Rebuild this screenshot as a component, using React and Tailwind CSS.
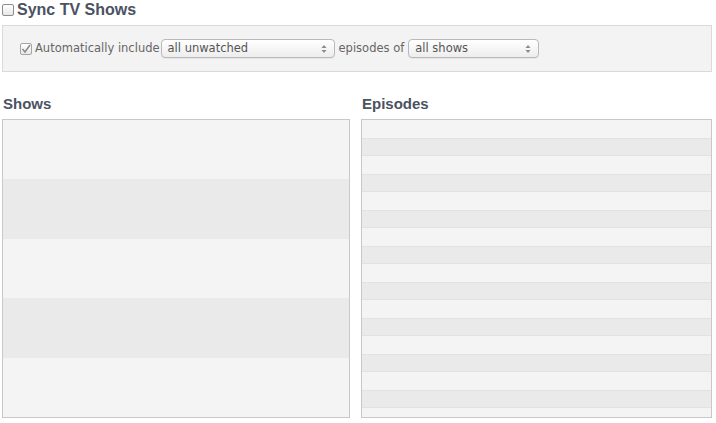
import React from "react";

function Arrows() {
  return (
    <svg width="6" height="10" viewBox="0 0 6 10" className="shrink-0">
      <path d="M3 1 L5.5 4 L0.5 4 Z" fill="#8a8a8a" />
      <path d="M3 9 L5.5 6 L0.5 6 Z" fill="#8a8a8a" />
    </svg>
  );
}

function Select({ label, width }) {
  return (
    <div
      className={`flex items-center justify-between h-[19px] rounded-[4px] border border-[#b9b9b9] bg-gradient-to-b from-[#ffffff] to-[#ededed] pl-[6px] pr-[7px] text-[11.5px] text-[#555] shadow-[0_1px_0_rgba(0,0,0,0.05)] ${width}`}
    >
      <span className="leading-none">{label}</span>
      <Arrows />
    </div>
  );
}

export default function App() {
  const showRows = [0, 1, 2, 3, 4];
  const epRows = Array.from({ length: 17 }, (_, i) => i);
  return (
    <div className="w-[716px] h-[423px] bg-white overflow-hidden font-['Liberation_Sans',Arial,sans-serif]">
      <div className="flex items-center h-[19px] pl-[2px] pt-[1px]">
        <div className="w-[12px] h-[12px] border border-[#8c8c8c] rounded-[2px] bg-gradient-to-b from-white to-[#e6e6e6]" />
        <span className="ml-[3px] text-[16px] font-bold text-[#4b5262] leading-none">Sync TV Shows</span>
      </div>
      <div className="mx-[2px] mt-[6px] w-[710px] h-[47px] border border-[#dadada] bg-[#f3f3f3] flex items-center pl-[17px] text-[11.5px] text-[#666] font-['DejaVu_Sans',sans-serif]">
        <div className="w-[12px] h-[12px] border border-[#a5a5a5] rounded-[2px] bg-gradient-to-b from-white to-[#e8e8e8] flex items-center justify-center">
          <svg width="10" height="10" viewBox="0 0 10 10">
            <path d="M1.5 5 L4 8 L9 1" fill="none" stroke="#8a8a8a" strokeWidth="1.5" />
          </svg>
        </div>
        <span className="ml-[3px]">Automatically include</span>
        <div className="ml-[1px]">
          <Select label="all unwatched" width="w-[174px]" />
        </div>
        <span className="ml-[4px]">episodes of</span>
        <div className="ml-[4px]">
          <Select label="all shows" width="w-[131px]" />
        </div>
      </div>
      <div className="flex mt-[23px] gap-[11px] pl-[2px]">
        <div className="w-[348px] flex flex-col">
          <div className="text-[15px] font-bold text-[#4b5262] leading-none pl-[1px] h-[24px] pt-[1px]">Shows</div>
          <div className="h-[299px] border border-[#c8c8c8] flex flex-col overflow-hidden">
            {showRows.map((i) => (
              <div
                key={i}
                className={`flex-1 ${i % 2 === 0 ? "bg-[#f4f4f4]" : "bg-[#eaeaea]"}`}
              />
            ))}
          </div>
        </div>
        <div className="w-[351px] flex flex-col">
          <div className="text-[15px] font-bold text-[#4b5262] leading-none pl-[1px] h-[24px] pt-[1px]">Episodes</div>
          <div className="h-[299px] border border-[#c8c8c8] flex flex-col overflow-hidden">
            {epRows.map((i) => (
              <div
                key={i}
                className={`h-[18px] shrink-0 ${i % 2 === 0 ? "bg-[#f4f4f4]" : "bg-[#eaeaea] border-y border-[#e2e2e2]"}`}
              />
            ))}
          </div>
        </div>
      </div>
    </div>
  );
}
